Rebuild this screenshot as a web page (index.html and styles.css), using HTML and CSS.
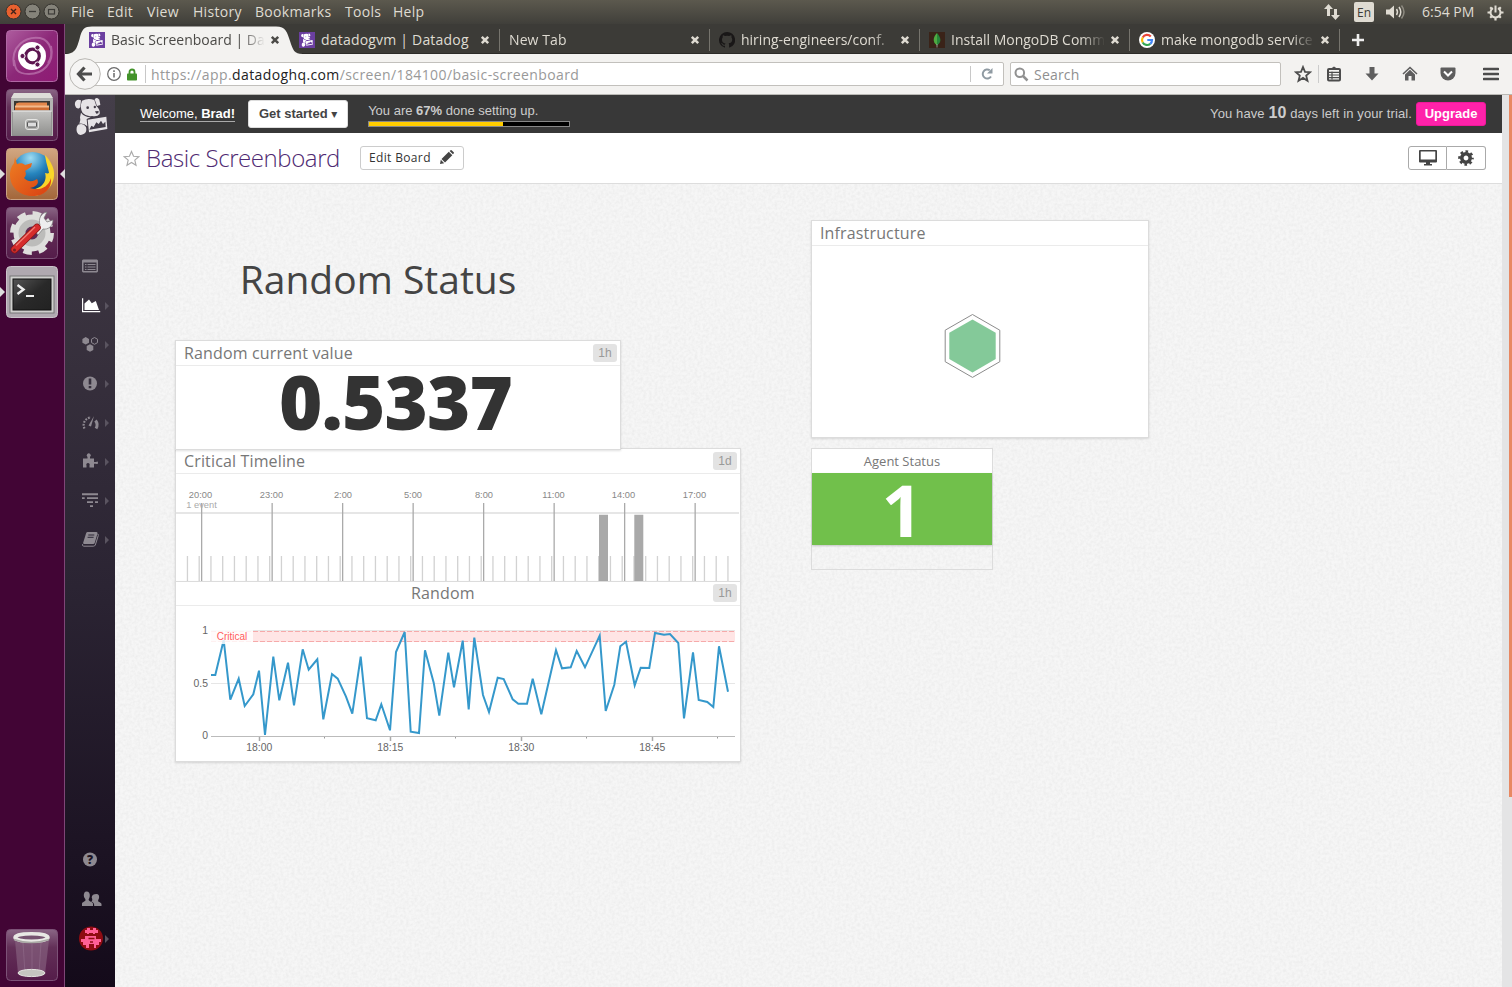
FILE: index.html
```html
<!DOCTYPE html>
<html lang="en">
<head>
<meta charset="utf-8">
<title>Basic Screenboard | Datadog</title>
<link rel="stylesheet" href="styles.css">
</head>
<body>
<svg class="defs" width="0" height="0">
  <symbol id="dog" viewBox="222 290 102 116">
    <path d="M243 300C230 294 221 306 226 317C230 328 239 325 241 320z"/>
    <path d="M284 297Q291 289 298 298Q300 307 301 314L291 317z"/>
    <path fill-rule="evenodd" d="M246 301Q264 292 283 299L289 317Q301 327 299 341Q292 350 276 347Q260 350 248 338Q238 322 246 301zM259 322a4 4 0 1 0 8 0a4 4 0 1 0-8 0zM281 320a3.500 3.500 0 1 0 7 0a3.500 3.500 0 1 0-7 0zM285 333l11-1l-1 7l-6 1z"/>
    <path d="M243 337Q253 350 272 351L260 356L262 378Q252 368 238 370Q243 360 240 351z"/>
    <path d="M234 373Q250 366 258 380Q262 398 249 402Q236 408 231 396Q227 382 234 373z"/>
    <path fill-rule="evenodd" d="M263 358L319 349L322 386L267 396zM268 388L317 380L316 364L309 371L303 361L296 371L289 366L281 380L274 376z"/>
  </symbol>
  <symbol id="x" viewBox="0 0 10 10"><path d="M1.8 1.8 L8.2 8.2 M8.2 1.8 L1.8 8.2" fill="none" stroke="currentColor" stroke-width="2.5"/></symbol>
</svg>

<div class="menubar">
  <svg class="winbtns" width="65" height="24" viewBox="0 0 65 24">
    <circle cx="13.5" cy="11.5" r="7.5" fill="#e9612f" stroke="#35332e"/><path d="M11 9l5 5M16 9l-5 5" stroke="#40231a" stroke-width="1.4"/>
    <circle cx="32.5" cy="11.5" r="7.5" fill="#85837a" stroke="#35332e"/><path d="M29 11.5h7" stroke="#3c3b37" stroke-width="1.3"/>
    <circle cx="51.5" cy="11.5" r="7.5" fill="#85837a" stroke="#35332e"/><rect x="48.5" y="9.5" width="6" height="4.5" fill="none" stroke="#3c3b37" stroke-width="1.2"/>
  </svg>
  <div class="menus">
    <span class="m1">File</span><span class="m2">Edit</span><span class="m3">View</span><span class="m4">History</span><span class="m5">Bookmarks</span><span class="m6">Tools</span><span class="m7">Help</span>
  </div>
  <div class="tray">
    <svg width="18" height="18" viewBox="0 0 18 18" fill="#dfdbd2"><path d="M5.5 1L10 6H7v7H4V6H1z M12.500 17L8 12h3V6h3v6h3z"/></svg>
    <span class="lang">En</span>
    <svg class="vol" width="20" height="16" viewBox="0 0 20 16"><path d="M0 5.500h3.500L8 1.500v13L3.500 10.500H0z" fill="#dfdbd2"/><path d="M10.500 5q2 3 0 6M13 3q3.500 5 0 10" fill="none" stroke="#dfdbd2" stroke-width="1.500"/><path d="M15.500 1.500q5 6.500 0 13" fill="none" stroke="#8d8a80" stroke-width="1.500"/></svg>
    <span class="clock">6:54 PM</span>
    <svg width="17" height="17" viewBox="0 0 17 17" fill="none" stroke="#dfdbd2"><path d="M6 4.200a5 5 0 1 0 5 0" stroke-width="2"/><path d="M8.500 1.500v7" stroke-width="2"/><path d="M3.200 3.200l1.800 1.800M13.800 3.200L12 5M.5 8.500H3M14 8.500h2.500M3.200 13.800L5 12M13.800 13.800L12 12M8.500 14v2.500" stroke-width="2.200"/></svg>
  </div>
</div>

<div class="desktop">
  <nav class="launcher">
    <svg width="52" height="52" viewBox="0 0 52 52">
      <defs><linearGradient id="dash" x1="0" y1="0" x2="1" y2="1"><stop offset="0" stop-color="#ae5d9f"/><stop offset=".5" stop-color="#8c2878"/><stop offset="1" stop-color="#8f1a74"/></linearGradient></defs>
      <rect x=".5" y=".5" width="51" height="51" rx="4" fill="url(#dash)" stroke="#b067a4"/>
      <path d="M8 36C4 16 20 6 34 8c12 3 14 17 8 25M45 16c4 18-9 28-22 28S9 38 8 30" fill="none" stroke="#c888bd" stroke-width="2" opacity=".6"/>
      <circle cx="26" cy="26" r="14" fill="#fff"/>
      <circle cx="26.500" cy="26" r="6.800" fill="none" stroke="#5c1650" stroke-width="3.200"/>
      <g fill="#5c1650" stroke="#fff" stroke-width="1"><circle cx="16.500" cy="26" r="2.600"/><circle cx="31.500" cy="17.500" r="2.600"/><circle cx="31.500" cy="34.500" r="2.600"/></g>
    </svg>
    <svg width="52" height="52" viewBox="0 0 52 52">
      <defs><linearGradient id="tile" x1="0" y1="0" x2="0" y2="1"><stop offset="0" stop-color="#8a6685"/><stop offset=".35" stop-color="#633058"/><stop offset="1" stop-color="#551c4a"/></linearGradient><linearGradient id="cab" x1="0" y1="0" x2="0" y2="1"><stop offset="0" stop-color="#c4c4c2"/><stop offset="1" stop-color="#90908e"/></linearGradient></defs>
      <rect x=".5" y=".5" width="51" height="51" rx="4" fill="url(#tile)" stroke="#7c5277"/>
      <path d="M8 4h36l3 6v37H5V10z" fill="#b4b4b2"/><path d="M8 4h36l3 5H5z" fill="#deded9"/>
      <rect x="8" y="12" width="36" height="12" fill="#393733"/>
      <path d="M13 13.500h28v10H10v-9z" fill="#e3864a"/><path d="M9 16.500h34v7H9z" fill="#f3b98b"/><path d="M9 18.500h34v5H9z" fill="#cf6c31"/>
      <rect x="6.500" y="21.500" width="39" height="25" fill="url(#cab)" stroke="#777" stroke-width=".5"/><path d="M6 22h40" stroke="#eee"/>
      <rect x="19.500" y="30.500" width="13" height="10" rx="2.500" fill="#b3b3b1" stroke="#e5e5e3"/><rect x="21.500" y="33" width="9" height="5" rx="1" fill="#ddd" stroke="#555"/>
    </svg>
    <div class="running">
      <svg width="52" height="52" viewBox="0 0 52 52">
        <defs><linearGradient id="fxt" x1="0" y1="0" x2="0" y2="1"><stop offset="0" stop-color="#d2a781"/><stop offset="1" stop-color="#a3663a"/></linearGradient><radialGradient id="globe" cx=".45" cy=".15" r=".8"><stop offset="0" stop-color="#9edcf3"/><stop offset=".5" stop-color="#2685be"/><stop offset="1" stop-color="#0b3f75"/></radialGradient><linearGradient id="fox" x1="0" y1="0" x2="1" y2="1"><stop offset="0" stop-color="#ee7f23"/><stop offset="1" stop-color="#d83f12"/></linearGradient></defs>
        <rect x=".5" y=".5" width="51" height="51" rx="4" fill="url(#fxt)" stroke="#c9a184"/>
        <circle cx="26.500" cy="24" r="20" fill="url(#globe)"/>
        <path d="M39 7c5 5 10 13 9 21-1 12-11 20-22 20l-6-6c14 1 22-8 19-17 3 1 4 0 4 0-1-6-3-10-4-18z" fill="#f9d529"/>
        <path d="M9 9l2 7c3-1 6-1 8 1l7-2-1 4-6 4c2 3 0 6-1 7 5 5 10 3 13 1 3 5-2 8-7 9 9 3 18 0 21-10 1 12-8 18-18 18C12 48 4 38 4 27c0-6 2-9 4-12z" fill="url(#fox)"/>
      </svg>
    </div>
    <svg width="52" height="52" viewBox="0 0 52 52">
      <rect x=".5" y=".5" width="51" height="51" rx="4" fill="url(#tile)" stroke="#7c5277"/>
      <circle cx="26" cy="26" r="19.500" fill="none" stroke="#dededc" stroke-width="5" stroke-dasharray="8.400 6.915"/>
      <circle cx="26" cy="26" r="13" fill="none" stroke="#dededc" stroke-width="11"/>
      <circle cx="26" cy="26" r="10" fill="none" stroke="#bcbcba" stroke-width="7"/>
      <path d="M29 24l5-6c-2-6 1-12 7-13l-3 6 3 4 6-2c0 6-5 10-10 9l-5 6z" fill="#eee" stroke="#777" stroke-width=".7"/>
      <path d="M8.500 42.500L31 20.500" stroke="#8b1616" stroke-width="7.500" stroke-linecap="round"/><path d="M8.500 42.500L31 20.500" stroke="#d62c2c" stroke-width="6" stroke-linecap="round"/><path d="M10 38.500L29 20" stroke="#f07f76" stroke-width="1.200"/><circle cx="8.500" cy="43" r="1.500" fill="#722"/>
    </svg>
    <div class="running left-only">
      <svg width="52" height="52" viewBox="0 0 52 52">
        <defs><linearGradient id="term" x1="0" y1="0" x2="1" y2="1"><stop offset="0" stop-color="#555"/><stop offset=".5" stop-color="#292929"/><stop offset="1" stop-color="#222"/></linearGradient></defs>
        <rect x=".5" y=".5" width="51" height="51" rx="4" fill="#b0a9b0" stroke="#cbc3ca"/>
        <rect x="4" y="10" width="44" height="37" fill="#cfcfcd" stroke="#777"/><rect x="7" y="13" width="38" height="31" fill="url(#term)" stroke="#111"/>
        <path d="M11.500 19l6 4.500-6 4.500" fill="none" stroke="#eee" stroke-width="2.400"/><path d="M20 30h8" stroke="#eee" stroke-width="2"/>
      </svg>
    </div>
    <svg class="trash" width="52" height="52" viewBox="0 0 52 52">
      <rect x=".5" y=".5" width="51" height="51" rx="4" fill="url(#tile)" stroke="#7c5277"/>
      <path d="M9 11l3 34q14 5 27 0l4-34z" fill="#8a6783" opacity=".6"/><path d="M17 14l2 30M26 15v28M35 14l-2 30" stroke="#a98aa4" stroke-width=".5" opacity=".6"/>
      <ellipse cx="25.500" cy="44" rx="13.500" ry="3.600" fill="#c5c5c0" stroke="#e4e4e0"/>
      <ellipse cx="25.500" cy="8.500" rx="16.500" ry="3.700" fill="#765370" stroke="#e8e8e4" stroke-width="3.500"/><path d="M8 10.500q17 6 35 0" fill="none" stroke="#a9a9a5" stroke-width="1.500"/>
    </svg>
  </nav>

  <div class="browser">
    <div class="tabs">
      <svg class="tabshape" width="240" height="30" viewBox="65 24 240 30"><path d="M65 54C76 54 77 47 79.500 39C82 29 84 26.500 92 26.500H276C286 26.500 287 32 290 41C293 50 294 54 303 54z" fill="#f3f2f0"/></svg>
      <div class="tab active"><svg class="fav" width="16" height="16"><rect width="16" height="16" fill="#6b3fa0"/><use href="#dog" x="1" y="1" width="14" height="14" fill="#fff"/></svg><span class="label">Basic Screenboard | Datadog</span><svg class="close" width="10" height="10"><use href="#x"/></svg></div>
      <div class="tab"><svg class="fav" width="16" height="16"><rect width="16" height="16" fill="#6b3fa0"/><use href="#dog" x="1" y="1" width="14" height="14" fill="#fff"/></svg><span class="label full">datadogvm | Datadog</span><svg class="close" width="10" height="10"><use href="#x"/></svg></div>
      <div class="tab"><span class="label wide">New Tab</span><svg class="close" width="10" height="10"><use href="#x"/></svg></div>
      <div class="tab"><svg class="fav" width="16" height="16" viewBox="0 0 16 16"><path fill="#191717" d="M8 0a8 8 0 0 0-2.500 15.600c.4.100.5-.2.500-.4v-1.500c-2.200.5-2.700-1-2.700-1-.4-.9-.9-1.200-.9-1.200-.7-.5.100-.5.100-.5.800.1 1.200.8 1.200.8.700 1.300 1.900.9 2.300.7.100-.5.300-.9.500-1.100C4.700 11.200 3 10.500 3 7.500c0-.9.300-1.600.8-2.200-.1-.2-.3-1 .1-2.100 0 0 .7-.2 2.200.8a7.600 7.600 0 0 1 4 0c1.500-1 2.200-.8 2.200-.8.400 1.100.2 1.900.1 2.100.5.600.8 1.300.8 2.200 0 3-1.900 3.700-3.600 3.900.3.300.5.700.5 1.500v2.300c0 .2.100.5.500.4A8 8 0 0 0 8 0z"/></svg><span class="label">hiring-engineers/conf.</span><svg class="close" width="10" height="10"><use href="#x"/></svg></div>
      <div class="tab"><svg class="fav" width="16" height="16" viewBox="0 0 16 16"><rect width="16" height="16" fill="#3a2318"/><path d="M8 1C5 4 3.500 8 6 11.500L8 13.500z" fill="#4faa41"/><path d="M8 1c3.500 4 4.500 8 2 10.500L8 13.500z" fill="#27863a"/><path d="M8 12v3.500" stroke="#aaa" stroke-width=".8"/></svg><span class="label">Install MongoDB Comm</span><svg class="close" width="10" height="10"><use href="#x"/></svg></div>
      <div class="tab"><svg class="fav" width="16" height="16" viewBox="0 0 16 16"><circle cx="8" cy="8" r="8" fill="#fff"/><g fill="none" stroke-width="2.200"><path d="M11.800 4.600A5 5 0 0 0 3.700 5.500" stroke="#ea4335"/><path d="M3.700 5.500a5 5 0 0 0 0 5" stroke="#fbbc05"/><path d="M3.700 10.500a5 5 0 0 0 7.600 1.300" stroke="#34a853"/><path d="M11.300 11.800A5 5 0 0 0 13 8H8.300" stroke="#4285f4"/></g></svg><span class="label">make mongodb service</span><svg class="close" width="10" height="10"><use href="#x"/></svg></div>
      <svg class="plus" width="14" height="14" viewBox="0 0 14 14"><path d="M7 1v12M1 7h12" stroke="#eee" stroke-width="2.600"/></svg>
    </div>

    <div class="toolbar">
      <svg class="back" width="32" height="32" viewBox="0 0 32 32"><circle cx="16" cy="16" r="15.300" fill="#f6f5f4" stroke="#b8b6b2"/><path d="M15.500 9.500L9.500 16l6 6.500M10 16h13" fill="none" stroke="#4c4c4c" stroke-width="3.200"/></svg>
      <div class="urlbar">
        <svg width="14" height="14" viewBox="0 0 14 14"><circle cx="7" cy="7" r="6.300" fill="none" stroke="#6a6a6a" stroke-width="1.200"/><path d="M7 6v4.500M7 3.300v1.600" stroke="#6a6a6a" stroke-width="1.500"/></svg>
        <svg class="lock" width="10" height="13" viewBox="0 0 10 13"><path d="M2.500 6V4a2.500 2.500 0 0 1 5 0v2" fill="none" stroke="#43932a" stroke-width="1.800"/><rect y="5.500" width="10" height="7" rx=".8" fill="#43932a"/></svg>
        <span class="address">https://app.<b>datadoghq.com</b>/screen/184100/basic-screenboard</span>
        <span class="reload"><svg width="14" height="14" viewBox="0 0 14 14"><path d="M11 9.500A4.500 4.500 0 1 1 9.800 3.300" fill="none" stroke="#8f9aa2" stroke-width="2"/><path d="M12.500 1v5.500H7z" fill="#8f9aa2"/></svg></span>
      </div>
      <div class="search"><svg width="15" height="15" viewBox="0 0 15 15" fill="none" stroke="#919191"><circle cx="5.800" cy="5.800" r="4.300" stroke-width="2"/><path d="M9 9l4.500 4.500" stroke-width="2.500"/></svg><span>Search</span></div>
      <div class="tools">
        <svg class="c-star" width="18" height="18" viewBox="0 0 18 18"><path d="M9 2l2 4.800 5.200.4-4 3.400 1.300 5.100L9 12.900l-4.500 2.800 1.300-5.100-4-3.400L7 6.800z" fill="none" stroke="#4c4c4c" stroke-width="1.800"/></svg>
        <svg class="c-list" width="16" height="16" viewBox="0 0 16 16"><rect x="2" y="3" width="12" height="11.500" rx="1" fill="none" stroke="#4c4c4c" stroke-width="2"/><path d="M5 2.500L8 .5l3 2z" fill="#4c4c4c"/><path d="M3 6.300h10M3 9h10M3 11.700h10M6 5.500v8" stroke="#4c4c4c" stroke-width="1.200"/></svg>
        <svg class="c" width="16" height="16" viewBox="0 0 16 16"><path d="M5.500 1h5v6.500h4L8 14.500 1.500 7.500h4z" fill="#5e5e5e"/></svg>
        <svg class="c" width="16" height="16" viewBox="0 0 16 16"><path d="M1 8l7-6.500L15 8" fill="none" stroke="#5e5e5e" stroke-width="1.600"/><path d="M3 8.500l5-4.700 5 4.700v6H9.500V10h-3v4.500H3z" fill="#5e5e5e"/></svg>
        <svg class="c" width="16" height="16" viewBox="0 0 16 16"><path d="M1.500 1.500h13q1 0 1 1V7A7.500 7.500 0 0 1 .5 7V2.500q0-1 1-1z" fill="#5e5e5e"/><path d="M4 5.500l4 4 4-4" fill="none" stroke="#fff" stroke-width="2"/></svg>
        <svg class="c-menu" width="16" height="14" viewBox="0 0 16 14"><path d="M1 2h14M1 7h14M1 12h14" stroke="#4c4c4c" stroke-width="2.600" stroke-linecap="round"/></svg>
      </div>
    </div>

    <div class="page">
      <aside class="sidebar">
        <svg class="logo" width="34" height="38.700"><use href="#dog" fill="#e6e3e6"/></svg>
        <ul class="nav">
          <li><svg viewBox="0 0 50 39"><path fill-rule="evenodd" d="M18 13.500h14l1 1v11l-1 1H18l-1-1v-11zM18.500 16.500v8.500h13v-8.500z"/><path d="M20 18.500h1.500M22.500 18.500h8M20 21h1.500M22.500 21h8M20 23.500h1.500M22.500 23.500h8" stroke="#8e8991" stroke-width="1.200"/></svg></li>
          <li class="on more"><svg viewBox="0 0 50 39"><path d="M17 13.300h1.200V26h17v1.200H17zM19.500 25v-6.500l4.500-4 2.800 3.800 4-2.300L34 25z"/></svg></li>
          <li class="more"><svg viewBox="0 0 50 39"><path d="M20.700 13l3.300 1.900v3.800l-3.300 1.900-3.300-1.900v-3.800zM25 20.200l3.300 1.900v3.800L25 27.800l-3.300-1.900v-3.800z"/><path d="M29.500 13.500l3 1.700v3.400l-3 1.700-3-1.700v-3.400z" fill="none" stroke="#8e8991"/></svg></li>
          <li class="more"><svg viewBox="0 0 50 39"><circle cx="25" cy="20.500" r="7"/><path d="M23.700 15.500h2.600v6h-2.600zM23.700 23h2.600v2.300h-2.600z" fill="#352f3c"/></svg></li>
          <li class="more"><svg viewBox="0 0 50 39"><path d="M19.500 26.500a7.500 7.500 0 0 1 6.500-11" fill="none" stroke="#8e8991" stroke-width="2.200" stroke-dasharray="1.800 1.200"/><path d="M30.500 18.500q3 4 .5 8" fill="none" stroke="#8e8991" stroke-width="3"/><path d="M29 14l-3 10.500-2.500-1z"/></svg></li>
          <li class="more"><svg viewBox="0 0 50 39"><path d="M18 17.500h4.500v-1.500a2 2 0 1 1 2.500 0v1.500h4v3.500h2q2-1.500 2 .7t-2 1h-2V26.500h-4.500v-2a1.700 1.700 0 1 0-3 0v2H18z"/></svg></li>
          <li class="more"><svg viewBox="0 0 50 39"><path d="M17 13.300h16v2H17zM17 17.200h2.700v1.800H17zM22 17.200h11v1.800H22zM22 21.200h6v1.800h-6zM30 21.200h3v1.800h-3zM25 25.200h3V27h-3z"/></svg></li>
          <li class="more"><svg viewBox="0 0 50 39"><path d="M22.500 13h9q1.300.3 1 1.500L29.700 24q-.4 1-1.500 1H19q-1.200-.2-.8-1.500l3-9.500q.4-1 1.300-1z"/><path d="M33 15l.3 1.500-3 9.500q-.5 1.200-2 1.200h-9.500q-1.800-.2-1.300-2" fill="none" stroke="#8e8991" stroke-width="1"/><path d="M23.300 16h6M22.600 18.300h6" stroke="#2e2837"/></svg></li>
        </ul>
        <ul class="nav lower">
          <li><svg viewBox="0 0 50 39"><circle cx="25" cy="19.500" r="7"/></svg><span class="q">?</span></li>
          <li><svg viewBox="0 0 50 39"><path d="M21.500 12.500c2.500 0 3.500 2 3.300 4.500-.2 2-1 2.500-1.200 3.800 0 1.700 4.400 2 4.400 4V27H17v-2.200c0-2 3.700-2 3.500-4-.3-1.300-1.600-2-1.700-4-.1-2.300.7-4.300 2.700-4.300z"/><path d="M31.500 15c2 0 2.800 1.500 2.600 3.500-.1 1.700-1 2.200-1 3.300 0 1.500 3.400 1.700 3.400 3.200v2h-7.300c.2-3-1-3.800-3-4.500 1.800-1 1-2.500.5-4 0-2.500 2-3.500 4.800-3.500z"/></svg></li>
          <li class="more"><svg viewBox="0 0 50 39"><circle cx="26" cy="20.500" r="12" fill="#8e0c12"/><path d="M20 12h2v-2h3v2h3v-2h3v2h2v3h-3v1h-2v-1h-4v1h-2v-1h-2zM22 18h9v3h5v3h-2v3h-3v3h-2v-4h-5v4h-3v-3h-3v-3h-2v-3h4v-3z" fill="#ff5f96"/><path d="M23.500 20.500h6M25 24h3" stroke="#8e0c12" stroke-width="1.500"/></svg></li>
        </ul>
      </aside>

      <main class="main">
        <header class="setup">
          <a class="welcome">Welcome, <b>Brad!</b></a>
          <span class="getstarted">Get started <i>▾</i></span>
          <div class="progress"><span>You are <b>67%</b> done setting up.</span><div class="bar"><div class="fill" style="width:67%"></div></div></div>
          <div class="trial">You have <b>10</b> days left in your trial.</div>
          <span class="upgrade">Upgrade</span>
        </header>
        <div class="titlebar">
          <svg class="favstar" width="17" height="17" viewBox="0 0 18 18"><path d="M9 1.500l2.200 5.100 5.500.5-4.200 3.600 1.300 5.400L9 13.200l-4.800 2.900 1.300-5.400L1.300 7.100l5.500-.5z" fill="none" stroke="#aaa" stroke-width="1.200"/></svg>
          <h1>Basic Screenboard</h1>
          <span class="edit">Edit Board <svg width="14" height="14" viewBox="0 0 14 14"><path d="M0 14l.8-4.200 3.400 3.400zM1.500 9L8.800 1.700l3.500 3.500L5 12.500zM9.600 1l1-.8q.7-.4 1.300.2l1.800 1.800q.5.600 0 1.200l-.8.900z" fill="#444"/></svg></span>
          <div class="btns">
            <span><svg width="18" height="16" viewBox="0 0 18 16"><path fill-rule="evenodd" d="M1 0h16q1 0 1 1v10.500q0 1-1 1h-6V14h2v1.500H5V14h2v-1.500H1q-1 0-1-1V1q0-1 1-1zm.7 1.500v8h14.600v-8z" fill="#444"/></svg></span>
            <span><svg width="16" height="16" viewBox="-8 -8 16 16"><circle r="4.200" fill="none" stroke="#444" stroke-width="3.600"/><circle r="6.500" fill="none" stroke="#444" stroke-width="2.600" stroke-dasharray="2.600 2.505" stroke-dashoffset="1.300"/></svg></span>
          </div>
        </div>

        <section class="board">
          <svg class="grain" width="1387" height="803"><filter id="paper" x="0" y="0" width="100%" height="100%"><feTurbulence type="fractalNoise" baseFrequency=".35" numOctaves="2" seed="4"/><feColorMatrix values="0 0 0 0 0  0 0 0 0 0  0 0 0 0 0  .07 0 0 0 -.023"/></filter><rect width="1387" height="803" filter="url(#paper)"/></svg>
          <div class="col left">
            <h2>Random Status</h2>
            <article class="card value">
              <h3>Random current value <em>1h</em></h3>
              <div class="big">0.5337</div>
            </article>
            <article class="card timeline">
              <h3>Critical Timeline <em>1d</em></h3>
              <svg width="564" height="107" viewBox="176 474 564 107">
                <path d="M176 513H739" stroke="#e6e6e6" stroke-width="2"/>
                <path d="M186.800 568.500H735" stroke="#d2d2d2" stroke-width="25" stroke-dasharray="1.300 10.450"/>
                <path d="M201 542H700" stroke="#aaa" stroke-width="78" stroke-dasharray="1.300 69.200"/>
                <path d="M599 514.700h9V581h-9zM634.300 514.700h9V581h-9z" fill="#a9a9a9"/>
                <g font-family="Liberation Sans, sans-serif" font-size="9.300" fill="#888" text-anchor="middle"><text x="200.500" y="498">20:00</text><text x="271.500" y="498">23:00</text><text x="343" y="498">2:00</text><text x="413" y="498">5:00</text><text x="484" y="498">8:00</text><text x="553.500" y="498">11:00</text><text x="623.500" y="498">14:00</text><text x="694.500" y="498">17:00</text><text x="201.500" y="508" fill="#aaa">1 event</text></g>
              </svg>
            </article>
            <article class="card random">
              <h3 class="mid">Random <em>1h</em></h3>
              <svg width="564" height="155" viewBox="176 606 564 155">
                <path d="M211 630.500h524M211 683.500h524" stroke="#e6e6e6"/><path d="M211 736.500h524" stroke="#bbb"/>
                <path d="M259.500 737v4M390.500 737v4M521.500 737v4M652.500 737v4" stroke="#aaa" stroke-width="1.500"/><path d="M324.500 737v1.500M455.500 737v1.500M586.500 737v1.500M717.500 737v1.500" stroke="#999"/>
                <path d="M211 631h524v11H211z" fill="#ff0000" opacity=".1"/><path d="M211 631.500h524M211 641.500h524" stroke="#f49c9c" stroke-dasharray="5 2" opacity=".8"/>
                <polyline fill="none" stroke="#3598cb" stroke-width="2" points="211,675 215.300,675 223.700,640 230.300,699.700 238.700,678.700 244.700,706 253.300,694.300 259,670.700 265,735 273.300,656.700 279.300,700.300 288,662.700 294,705.300 302.700,649.300 308.700,669.700 317.300,659.300 323.300,719.300 332,674 337.700,678.700 346,696.700 352.300,713.700 360.700,656.700 367,718.300 375.700,720.300 381.300,704.300 390,730.300 396,652 404.700,632 410.700,731.700 419,733 425,650.300 433.700,682.700 439.300,715.700 448.300,652.700 454,687.300 462.700,640.700 468.700,709.300 474.300,637.700 483,695 489,712 497.700,677.700 503.700,679 512.700,699.300 518.300,703.700 527,703.700 532.700,678.700 541.300,714.300 556,650.300 562,668.300 570.700,667.300 576.700,651 585,667.300 599.700,635.700 605.700,711 614.300,684.700 620.300,646.300 626,641.700 634.700,685.300 640.700,667.700 649.300,668 655,633 664,634.700 670,634 678.300,643 684,718.300 693,652.300 698.700,700 707.300,702 713.300,707 719,646.300 728,691.700"/>
                <rect x="211" y="630" width="42" height="14" fill="#fff" opacity=".82"/>
                <g font-family="Liberation Sans, sans-serif" font-size="10.400" fill="#666" text-anchor="middle"><text x="259.300" y="751">18:00</text><text x="390.300" y="751">18:15</text><text x="521.300" y="751">18:30</text><text x="652.300" y="751">18:45</text><text x="232" y="640" font-size="10" fill="#ff5c5c">Critical</text><g text-anchor="end"><text x="208" y="634">1</text><text x="208" y="687">0.5</text><text x="208" y="739">0</text></g></g>
              </svg>
            </article>
          </div>
          <div class="col right">
            <article class="card infra">
              <h3>Infrastructure</h3>
              <svg width="336" height="191" viewBox="812 246 336 191"><path d="M972.500 314.500l27.300 15.700v31.500l-27.300 15.700-27.300-15.700v-31.500z" fill="#fff" stroke="#8c8c8c"/><path d="M972.500 319.500l23.200 13.200v26.400l-23.200 13.400-23.200-13.400v-26.400z" fill="#84c999"/></svg>
            </article>
            <article class="agent">
              <h3>Agent Status</h3>
              <div class="ok">1</div>
            </article>
          </div>
        </section>
      </main>
      <div class="gutter"><div class="stripe"></div></div>
    </div>
  </div>
</div>
</body>
</html>
```
FILE: styles.css
```css
* { box-sizing: border-box; margin: 0; padding: 0; }
html, body { width: 1512px; height: 987px; overflow: hidden; }
body { font-family: "Open Sans", "Noto Sans", sans-serif; display: flex; flex-direction: column; background: #3c3b37; }
svg { display: block; flex: none; }
.defs { position: absolute; }

.menubar { height: 24px; display: flex; background: linear-gradient(#5c594e, #403f3a); color: #dfdbd2; font-size: 14px; line-height: 24px; letter-spacing: .3px; }
.menus { display: flex; padding-left: 6px; }
.menus span { white-space: nowrap; }
.m1 { width: 36px; } .m2 { width: 40px; } .m3 { width: 46px; } .m4 { width: 62px; } .m5 { width: 90px; } .m6 { width: 48px; }
.tray { margin-left: auto; display: flex; align-items: center; padding-right: 8px; }
.lang { width: 20px; height: 20px; margin: 0 12px 0 13px; border-radius: 2px; background: #dfdbd2; color: #3c3b37; font-size: 12px; line-height: 21px; text-align: center; letter-spacing: 0; }
.vol { margin-right: 16px; }
.clock { width: 65px; white-space: nowrap; letter-spacing: 0; }

.desktop { display: flex; height: 963px; }
.launcher { width: 65px; padding: 6px 0 6px 6px; display: flex; flex-direction: column; gap: 7px; background: #420535; border-right: 1px solid #7f4677; }
.trash { margin-top: auto; }
.running { position: relative; width: 52px; height: 52px; }
.running::before, .running::after { content: ""; position: absolute; top: 21px; border: 5px solid transparent; }
.running::before { left: -6px; border-left-color: #ddd; border-right-width: 0; }
.running::after { right: -7px; border-right-color: #ddd; border-left-width: 0; }
.left-only::after { display: none; }

.browser { width: 1447px; display: flex; flex-direction: column; }
.tabs { position: relative; height: 30px; display: flex; align-items: center; padding-left: 14px; background: #3c3b37; border-bottom: 1px solid #2c2b28; }
.tabshape { position: absolute; left: 0; top: 0; }
.tab { position: relative; width: 210px; height: 22px; display: flex; align-items: center; padding-left: 10px; margin-top: 2px; color: #dfdbd2; box-shadow: 1px 0 #76746d; }
.tab.active { color: #4b4a47; box-shadow: none; }
.label { width: 154px; margin: 0 5px 0 6px; font-size: 14px; line-height: 20px; white-space: nowrap; overflow: hidden; -webkit-mask-image: linear-gradient(90deg, #000 85%, transparent); mask-image: linear-gradient(90deg, #000 85%, transparent); }
.label.full { letter-spacing: .2px; -webkit-mask-image: none; mask-image: none; }
.label.wide { width: 176px; margin-left: 0; letter-spacing: .1px; }
.plus { margin: 2px 0 0 12px; }

.toolbar { height: 41px; display: flex; align-items: center; padding-left: 4px; background: #f3f2f0; border-bottom: 1px solid #bab9b5; }
.back { position: relative; z-index: 1; }
.urlbar { width: 914px; height: 24px; margin-left: -11px; display: flex; align-items: center; padding-left: 16px; background: #fff; border: 1px solid #c2c0bc; border-radius: 2px; }
.lock { margin: 0 8px 0 6px; }
.address { border-left: 1px solid #c8c8c8; padding-left: 5px; font-size: 14px; line-height: 17px; padding-top: 1px; letter-spacing: .39px; color: #999; white-space: nowrap; }
.address b { font-weight: 400; color: #222; }
.reload { margin-left: auto; width: 33px; height: 16px; padding-left: 9px; border-left: 1px solid #c8c8c8; display: flex; align-items: center; }
.search { width: 271px; height: 24px; margin-left: 6px; display: flex; align-items: center; gap: 5px; padding-left: 3px; background: #fff; border: 1px solid #c2c0bc; border-radius: 2px; color: #8f8f8f; font-size: 14px; letter-spacing: .2px; }
.tools { height: 36px; display: flex; align-items: center; padding-left: 13px; }
.c-star { margin-right: 6px; }
.c-list { margin: 0 11px 0 7px; }
.c { margin: 0 11px; }
.tools::before { content: ""; order: 1; width: 1px; height: 18px; background: #ccc; }
.tools .c-star { order: 0; }
.tools .c-list, .tools .c, .tools .c-menu { order: 2; }
.tools::after { content: ""; order: 1; width: 0; }
.c-menu { margin-left: 16px; }

.page { display: flex; height: 892px; }
.sidebar { width: 50px; display: flex; flex-direction: column; background: linear-gradient(#443e49 0, #3b3440 20%, #2b2433 55%, #1c1323 85%, #140a1a); }
.logo { margin: 2px 0 0 9px; }
.nav { list-style: none; margin-top: 110px; }
.nav.lower { margin: auto 0 30px; }
.nav li { position: relative; height: 39px; }
.nav svg { width: 50px; height: 39px; fill: #8e8991; }
.nav .on svg { fill: #fff; }
.more::after { content: ""; position: absolute; left: 40px; top: 17px; border: 4px solid transparent; border-left-color: #5a5460; border-right: 0; }
.q { position: absolute; left: 0; top: 10px; width: 50px; text-align: center; font: 800 12px/19px "Open Sans", sans-serif; color: #1c1323; }

.main { width: 1387px; display: flex; flex-direction: column; }
.setup { height: 38px; display: flex; align-items: center; padding: 0 16px 0 25px; background: #383838; color: #ccc; font: 13px/15px "Liberation Sans", Arial, sans-serif; white-space: nowrap; }
.welcome { color: #fff; border-bottom: 1px solid #aaa; }
.getstarted { width: 100px; height: 28px; margin-left: 13px; border: 1px solid #ddd; border-radius: 3px; background: #fff; color: #444; font-weight: 700; line-height: 26px; text-align: center; }
.getstarted i { font: 12px "DejaVu Sans", sans-serif; }
.progress { margin: 2px 0 0 20px; }
.bar { width: 202px; height: 6px; margin-top: 3px; border: 1px solid #888; background: #000; }
.fill { height: 100%; background: #fc0; }
.trial { margin: -2px 0 0 auto; letter-spacing: .11px; }
.trial b { font-size: 16px; }
.upgrade { width: 70px; height: 24px; margin-left: 4px; border: 1px solid #f0189a; border-radius: 3px; background: #ff22aa; color: #fff; font-weight: 700; line-height: 22px; text-align: center; }

.titlebar { height: 51px; display: flex; align-items: center; padding: 0 16px 0 8px; background: #fff; border-bottom: 1px solid #ddd; }
h1 { width: 213px; margin-left: 6px; font-size: 24px; line-height: 30px; font-weight: 300; letter-spacing: -.42px; color: #4f2a72; white-space: nowrap; }
.edit { width: 104px; height: 24px; margin-left: 1px; padding: 0 0 2px 8px; display: flex; align-items: center; gap: 9px; border: 1px solid #ccc; border-radius: 3px; font-size: 12px; letter-spacing: .35px; color: #333; white-space: nowrap; }
.btns { margin-left: auto; display: flex; }
.btns span { width: 39px; height: 24px; border: 1px solid #aaa; display: flex; align-items: center; justify-content: center; }
.btns span:first-child { border-radius: 3px 0 0 3px; }
.btns span:last-child { border-left-width: 0; border-radius: 0 3px 3px 0; }

.board { position: relative; height: 803px; display: flex; align-items: flex-start; padding-left: 60px; background: #f6f6f6; }
.grain { position: absolute; left: 0; top: 0; }
.col { position: relative; display: flex; flex-direction: column; align-items: flex-start; }
.left { width: 566px; margin-right: 70px; }
h2 { width: 406px; height: 156px; padding-top: 68px; text-align: center; font-size: 39px; line-height: 54px; font-weight: 400; color: #444; white-space: nowrap; }
.card { position: relative; border: 1px solid #dcdcdc; background: #fff; box-shadow: 0 1px 2px rgba(0, 0, 0, .12); }
h3 { height: 25px; display: flex; justify-content: space-between; align-items: center; padding: 0 3px 0 8px; border-bottom: 1px solid #ebebeb; color: #777; font-size: 16px; line-height: 24px; font-weight: 400; letter-spacing: .15px; white-space: nowrap; }
h3 em { width: 24px; height: 18px; border-radius: 3px; background: #e3e3e3; color: #999; font: 12px/18px "Liberation Sans", Arial, sans-serif; text-align: center; }
.mid { padding-left: 235px; }
.value { width: 446px; height: 110px; z-index: 1; }
.big { height: 72px; text-align: center; padding-right: 5px; font-size: 74px; line-height: 71px; font-weight: 800; letter-spacing: -.9px; color: #333; }
.timeline { width: 566px; height: 134px; margin-top: -2px; }
.random { width: 566px; height: 181px; margin-top: -1px; }
.random h3 { height: 24px; line-height: 22px; padding-bottom: 2px; }
.right { padding-top: 36px; }
.infra { width: 338px; height: 218px; }
.agent { width: 182px; height: 122px; margin-top: 10px; border: 1px solid #dcdcdc; }
.agent h3 { height: 24px; justify-content: center; padding: 0; border: 0; background: #fff; font-size: 13px; letter-spacing: 0; }
.ok { height: 72px; background: #71c04b; color: #fff; text-align: center; font-size: 72px; line-height: 73px; font-weight: 700; box-shadow: 0 1px 2px rgba(0, 0, 0, .2); }

.gutter { width: 10px; padding-left: 7px; background: #e4e4e5; }
.stripe { width: 3px; height: 702px; background: #e88862; }
```
